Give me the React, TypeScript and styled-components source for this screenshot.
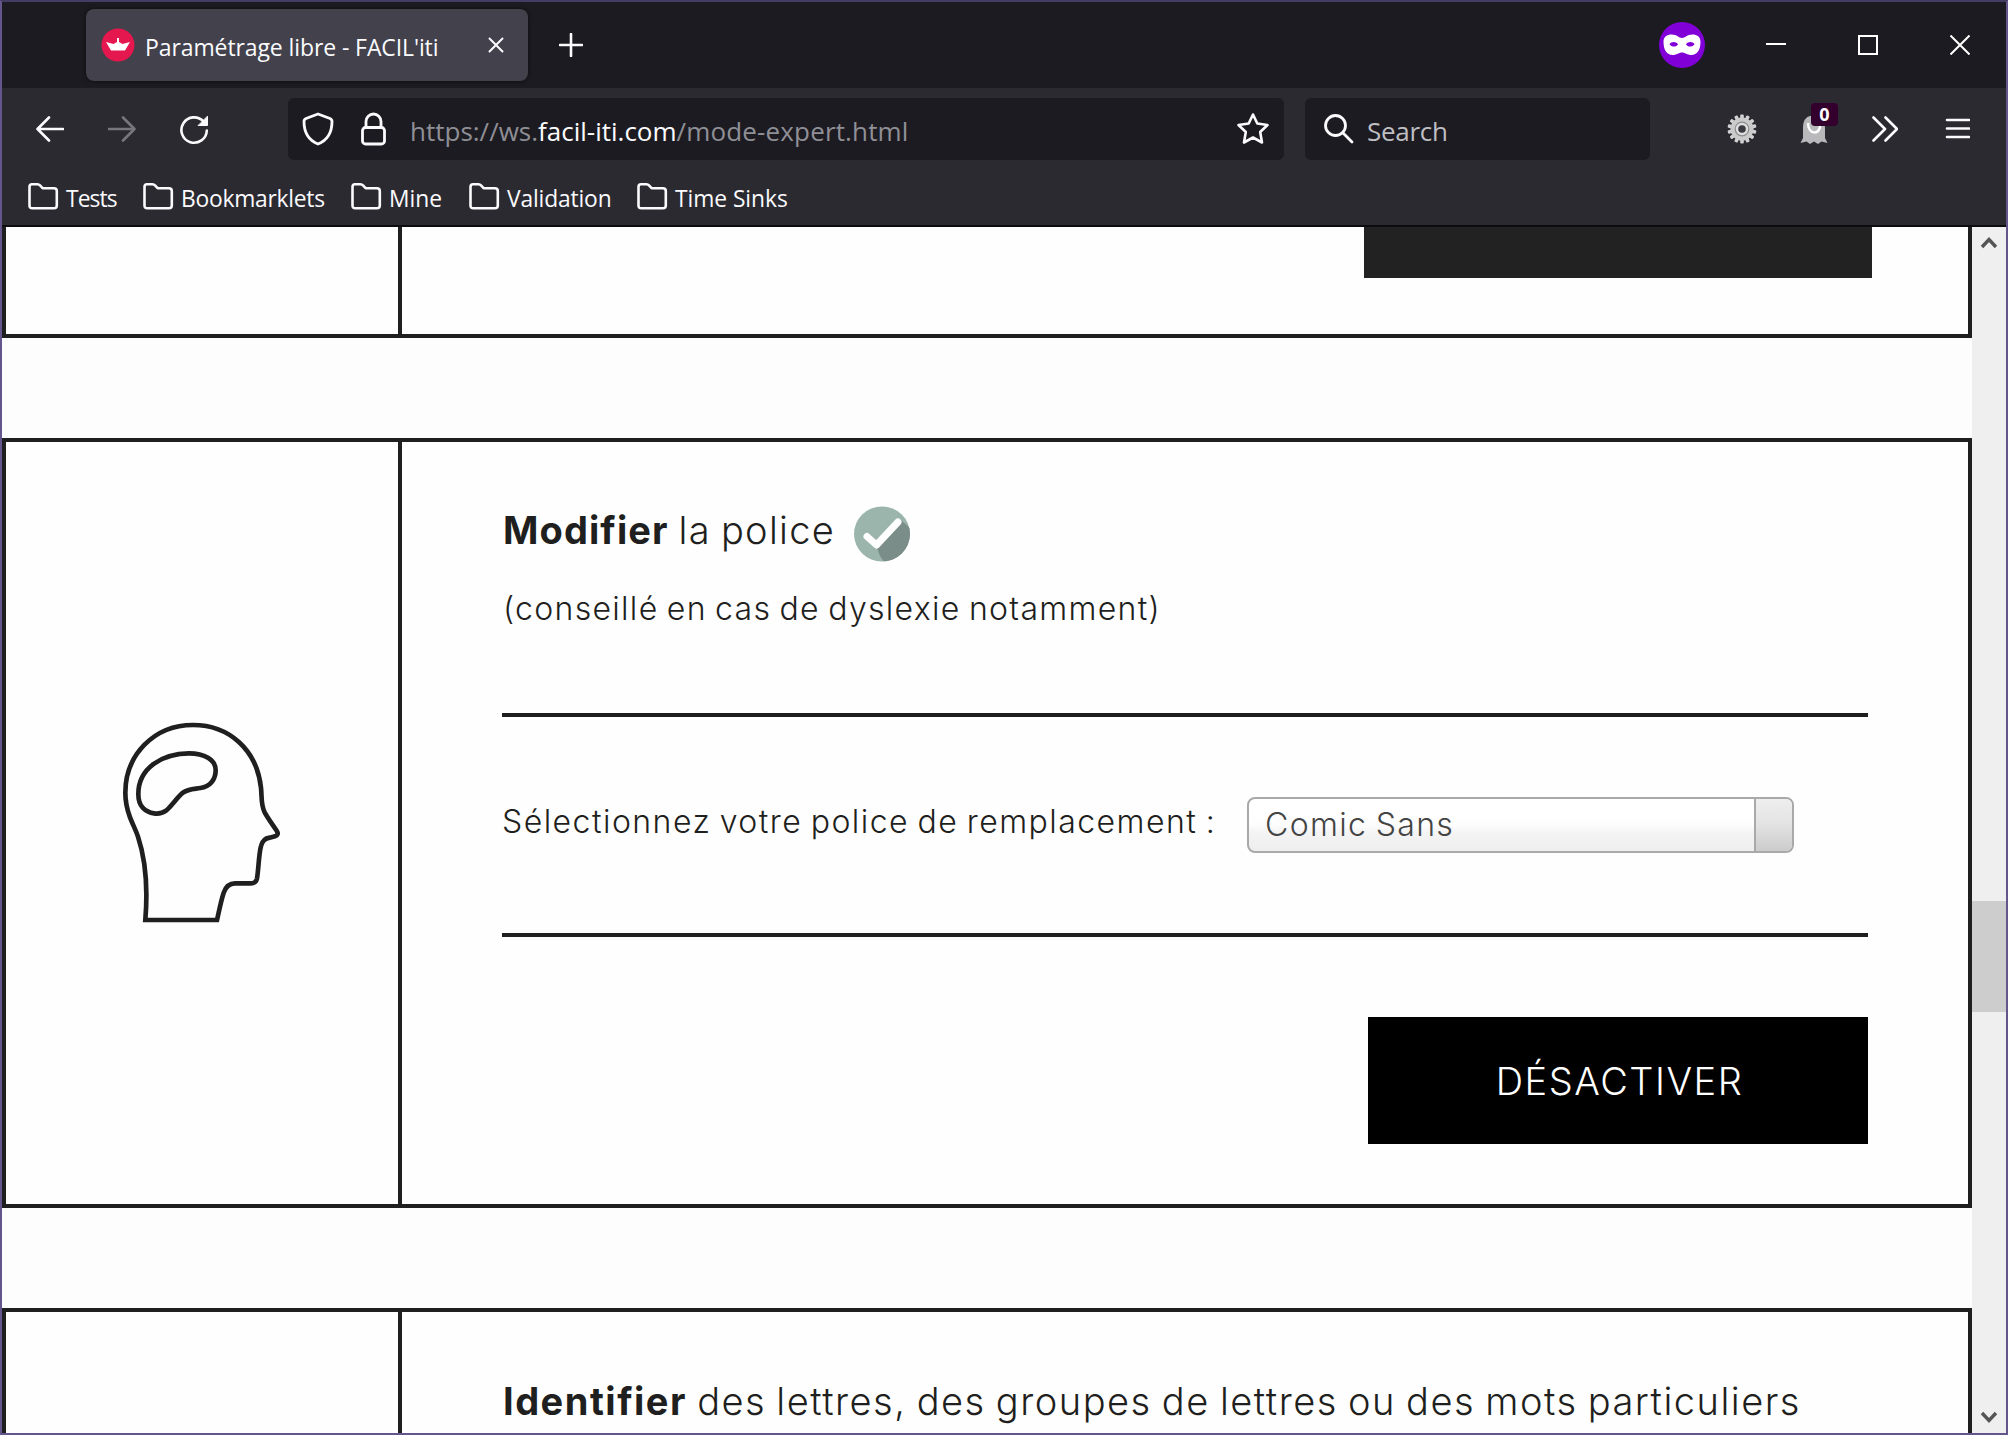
import React from "react";
import styled, { createGlobalStyle } from "styled-components";

const INK = "#1f1f20";
const UI = `"Open Sans", "Noto Sans", sans-serif`;
const BODY = `Inter, "Open Sans", sans-serif`;

const Global = createGlobalStyle`
  *, *::before, *::after { box-sizing: border-box; }
  html, body { margin: 0; padding: 0; overflow: hidden; }
  svg { display: block; flex: none; }
`;

const Browser = styled.div`
  width: 2008px;
  height: 1435px;
  display: flex;
  flex-direction: column;
  overflow: hidden;
  border: 2px solid #64558c;
  border-top-color: #423d62;
  background: #2b2a31;
  font-family: ${UI};
  color: #fbfbfe;
`;

const TabStrip = styled.header`
  height: 86px;
  flex: none;
  display: flex;
  align-items: center;
  background: #1c1b21;
  padding: 0 36px 0 84px;
`;

const Tab = styled.div`
  width: 442px;
  height: 72px;
  display: flex;
  align-items: center;
  background: #42414c;
  border-radius: 8px;
  padding: 0 24px 0 15px;
  box-shadow: 0 0 4px rgba(0, 0, 0, 0.6);
`;

const Spacer = styled.div`
  flex: 1;
`;

const UiText = styled.span<{ $size?: number; $ls?: number; $color?: string; $ml?: number }>`
  font-size: ${(p) => p.$size ?? 23}px;
  letter-spacing: ${(p) => p.$ls ?? 0}px;
  color: ${(p) => p.$color ?? "#fbfbfe"};
  margin-left: ${(p) => p.$ml ?? 0}px;
  padding-top: 4px;
  line-height: 30px;
  white-space: pre;
`;

const NewTab = styled.div`
  margin-left: 31px;
`;

const WindowControls = styled.div`
  display: flex;
  align-items: center;
  gap: 72px;
  margin-left: 61px;
`;

const Toolbar = styled.div`
  height: 84px;
  flex: none;
  display: flex;
  align-items: center;
  padding: 0 36px 0 34px;
`;

const NavButtons = styled.div`
  width: 252px;
  display: flex;
  gap: 44px;
`;

const Field = styled.div<{ $width: number; $pad: string }>`
  width: ${(p) => p.$width}px;
  height: 62px;
  margin-top: -3px;
  display: flex;
  align-items: center;
  background: #1c1b21;
  border-radius: 6px;
  padding: ${(p) => p.$pad};
`;

const SearchSlot = styled.div`
  margin-left: 21px;
`;

const Extensions = styled.div`
  flex: 1;
  display: flex;
  align-items: center;
  justify-content: flex-end;
  padding-bottom: 2px;
`;

const Ghost = styled.div`
  position: relative;
  width: 28px;
  height: 30px;
  margin: 0 44px 0 43px;
`;

const Badge = styled.span`
  position: absolute;
  left: 11px;
  top: -11px;
  width: 27px;
  height: 23px;
  border-radius: 4px;
  background: #33002d;
  color: #fff;
  font: 700 18px/22px "Open Sans", sans-serif;
  text-align: center;
`;

const Bookmarks = styled.nav`
  height: 53px;
  flex: none;
  display: flex;
  align-items: flex-start;
  padding: 8px 0 0 25px;
`;

const Bookmark = styled.div<{ $width: number }>`
  width: ${(p) => p.$width}px;
  height: 32px;
  display: flex;
  align-items: center;
`;

const BookmarkLabel = styled(UiText)`
  padding-top: 6px;
  margin-left: 7px;
`;

const Viewport = styled.div`
  flex: 1;
  min-height: 0;
  display: flex;
  background: #fdfdfd;
  border-top: 2px solid #0c0c0d;
`;

const Page = styled.main`
  width: 1970px;
  display: flex;
  flex-direction: column;
  gap: 100px;
  overflow: hidden;
  font-family: ${BODY};
  color: ${INK};
`;

const Card = styled.section<{ $height: number; $cut?: "top" | "bottom" }>`
  height: ${(p) => p.$height}px;
  flex: none;
  display: flex;
  border: 4px solid ${INK};
  border-top-width: ${(p) => (p.$cut === "top" ? 0 : 4)}px;
  border-bottom-width: ${(p) => (p.$cut === "bottom" ? 0 : 4)}px;
  background: #fefefe;
`;

const IconCell = styled.div`
  width: 396px;
  flex: none;
  display: flex;
  align-items: center;
  justify-content: center;
  border-right: 4px solid ${INK};
`;

const Content = styled.div<{ $pad?: string }>`
  flex: 1;
  display: flex;
  flex-direction: column;
  padding: ${(p) => p.$pad ?? "0 100px"};
`;

const PrevButton = styled.div`
  width: 508px;
  height: 51px;
  margin-right: -4px;
  align-self: flex-end;
  background: #222223;
`;

const Intro = styled.div`
  height: 271px;
  padding-top: 64px;
`;

const Heading = styled.h2`
  display: flex;
  align-items: center;
  height: 56px;
  margin: 0;
  font-weight: 300;
`;

const Text = styled.span<{ $size: number; $ls?: number; $weight?: number; $ml?: number; $color?: string; $lift?: number }>`
  display: block;
  font-size: ${(p) => p.$size}px;
  font-weight: ${(p) => p.$weight ?? 300};
  letter-spacing: ${(p) => p.$ls ?? 0}px;
  word-spacing: -2px;
  margin-left: ${(p) => p.$ml ?? 0}px;
  color: ${(p) => p.$color ?? "inherit"};
  line-height: 44px;
  padding-bottom: ${(p) => p.$lift ?? 0}px;
  white-space: pre;
`;

const CheckSlot = styled.div`
  margin-left: 18px;
`;

const Note = styled.p`
  margin: 25px 0 0;
`;

const Rule = styled.div`
  height: 4px;
  flex: none;
  background: ${INK};
`;

const Choice = styled.div`
  height: 216px;
  display: flex;
  align-items: center;
`;

const ChoiceLabel = styled.div`
  width: 745px;
  flex: none;
`;

const Select = styled.div`
  width: 547px;
  height: 56px;
  display: flex;
  border: 2px solid #a9a9a9;
  border-radius: 8px;
  overflow: hidden;
  background: linear-gradient(#ffffff 20%, #fdfdfd 50%, #f4f4f4 64%, #eeeeee 100%);
`;

const SelectValue = styled.div`
  flex: 1;
  display: flex;
  align-items: center;
  padding-left: 16px;
`;

const SelectArrow = styled.div`
  width: 38px;
  border-left: 2px solid #a9a9a9;
  background: linear-gradient(#eeeeee 0%, #e4e4e4 45%, #cccccc 100%);
`;

const Disable = styled.button`
  width: 500px;
  height: 127px;
  margin: 80px 0 0;
  padding: 0 0 0 3px;
  border: 0;
  align-self: flex-end;
  background: #000;
  color: #fff;
  font-family: ${BODY};
`;

const Scrollbar = styled.aside`
  flex: 1;
  display: flex;
  flex-direction: column;
  align-items: center;
  background: #efefef;
  padding: 9px 0;
`;

const Thumb = styled.div`
  width: 34px;
  height: 111px;
  margin: 652px 0 auto;
  background: #cdcdcd;
`;

const stroke = { fill: "none", stroke: "#fbfbfe", strokeWidth: 2.6, strokeLinecap: "round", strokeLinejoin: "round" } as const;

const Favicon = () => (
  <svg width="34" height="34" viewBox="0 0 34 34">
    <circle cx="17" cy="17" r="16.5" fill="#e5174f" />
    <path d="M5 14 L12.5 16 L16 14 V10 H18 V14 L21.5 16 L29 14 L24 22.5 H10 Z" fill="#fff" />
  </svg>
);

const Mask = () => (
  <svg width="46" height="46" viewBox="0 0 46 46">
    <circle cx="23" cy="23" r="23" fill="#8000d7" />
    <path
      fillRule="evenodd"
      fill="#fff"
      d="M4.500 20 C4.500 14.500 8 12.500 12.500 12.500 C18 12.500 20 16 23 16 C26 16 28 12.500 33.500 12.500 C38 12.500 41.500 14.500 41.500 20 C41.500 28 38 33 32.500 33 C28 33 26 30.500 23 30.500 C20 30.500 18 33 13.500 33 C8 33 4.500 28 4.500 20 Z M10.500 22.300 C12 19.300 17 19 19 22.300 C17.500 25.400 12.500 25.300 10.500 22.300 Z M27 22.300 C29 19 34 19.300 35.500 22.300 C33.500 25.300 28.500 25.400 27 22.300 Z"
    />
  </svg>
);

const Folder = () => (
  <svg width="32" height="29" viewBox="0 0 32 29" {...stroke}>
    <path d="M2.500 5 Q2.500 2.300 5 2.300 H10.500 Q12 2.300 13 3.400 L15.600 6.200 H27 Q29.800 6.200 29.800 9 V23.500 Q29.800 26.300 27 26.300 H5.300 Q2.500 26.300 2.500 23.500 Z" />
  </svg>
);

const Gear = () => (
  <svg width="30" height="30" viewBox="0 0 30 30">
    {Array.from({ length: 14 }, (_, i) => (
      <rect key={i} x="13.200" y="0.500" width="3.600" height="6" rx="1" fill="#d2d2d2" transform={`rotate(${(i * 360) / 14} 15 15)`} />
    ))}
    <circle cx="15" cy="15" r="11.500" fill="#cacaca" />
    <circle cx="15" cy="15" r="6.800" fill="#dedede" stroke="#8d8d8d" strokeWidth="1.200" />
    <circle cx="15" cy="15" r="3.800" fill="#3a3a40" />
  </svg>
);

const Head = () => (
  <svg width="166.700" height="206.700" viewBox="60 60 500 620" fill="none" stroke={INK} strokeWidth="14" strokeLinejoin="round">
    <path
      strokeLinejoin="miter"
      d="M139 660 H354 C360 634 366 602 374 578 C381 558 391 550 408 550 H456 C467 550 472 545 474 535 C479 504 479 465 486 438 C490 421 499 415 512 413 L528 409 C537 406 538 400 533 392 C521 374 506 354 497 337 C485 313 489 291 486 264 C474 150 391 75 282 75 C165 75 79 165 79 278 C79 303 84 327 92 349 C99 369 110 389 117 410 C142 485 147 561 139 660 Z"
    />
    <path d="M118 282 C118 205 188 161 270 160 C315 160 350 178 350 211 C350 238 334 260 304 264 C286 267 267 266 252 278 C235 291 218 318 201 332 C181 347 149 342 131 323 C121 312 118 300 118 282 Z" />
  </svg>
);

const Check = () => (
  <svg width="58" height="56" viewBox="0 0 58 56">
    <defs>
      <clipPath id="disc"><ellipse cx="29" cy="28" rx="28" ry="27.500" /></clipPath>
    </defs>
    <ellipse cx="29" cy="28" rx="28" ry="27.500" fill="#9bb5ad" />
    <path clipPath="url(#disc)" fill="#7b8d88" d="M24 42 L48 14 L75 38 L50 70 L34 60 L27 50 Z" />
    <path d="M14 30.500 L23.500 39 L45 16" fill="none" stroke="#fff" strokeWidth="7" strokeLinejoin="round" strokeLinecap="round" />
  </svg>
);

const Chevron = ({ down }: { down?: boolean }) => (
  <svg width="18" height="13" viewBox="0 0 18 13" fill="none" stroke="#555" strokeWidth="3.400">
    <path d={down ? "M2 2 L9 9.500 L16 2" : "M2 11 L9 3.500 L16 11"} />
  </svg>
);

const bookmarks = [
  { label: "Tests", width: 115, ls: -0.9 },
  { label: "Bookmarklets", width: 208, ls: -0.25 },
  { label: "Mine", width: 118, ls: 0 },
  { label: "Validation", width: 168, ls: -0.15 },
  { label: "Time Sinks", width: 180, ls: -0.05 },
];

export default function App() {
  return (
    <>
      <Global />
      <Browser>
        <TabStrip>
          <Tab>
            <Favicon />
            <UiText $ml={10} $ls={-0.1}>Paramétrage libre - FACIL'iti</UiText>
            <Spacer />
            <svg width="16" height="16" viewBox="0 0 16 16" {...stroke} strokeWidth={2}>
              <path d="M1.500 1.500 L14.500 14.500 M14.500 1.500 L1.500 14.500" />
            </svg>
          </Tab>
          <NewTab>
            <svg width="24" height="24" viewBox="0 0 24 24" {...stroke}>
              <path d="M12 1 V23 M1 12 H23" />
            </svg>
          </NewTab>
          <Spacer />
          <Mask />
          <WindowControls>
            <svg width="20" height="20" viewBox="0 0 20 20"><rect y="8" width="20" height="2" fill="#fff" /></svg>
            <svg width="20" height="20" viewBox="0 0 20 20"><rect x="1" y="1" width="18" height="18" fill="none" stroke="#fff" strokeWidth="2" /></svg>
            <svg width="20" height="20" viewBox="0 0 20 20"><path d="M0.500 0.500 L19.500 19.500 M19.500 0.500 L0.500 19.500" stroke="#fff" strokeWidth="2" /></svg>
          </WindowControls>
        </TabStrip>
        <Toolbar>
          <NavButtons>
            <svg width="28" height="28" viewBox="0 0 28 28" {...stroke}><path d="M27 14 H1.500 M13 2.500 L1.500 14 L13 25.500" /></svg>
            <svg width="28" height="28" viewBox="0 0 28 28" {...stroke} stroke="#77767c"><path d="M1 14 H26.500 M15 2.500 L26.500 14 L15 25.500" /></svg>
            <svg width="29" height="30" viewBox="0 0 29 30" {...stroke}>
              <path d="M26.800 15.500 A12.700 12.700 0 1 1 23.500 6.500" />
              <path d="M27.500 1.500 V10.500 H18.500 Z" fill="#fbfbfe" strokeWidth="1" />
            </svg>
          </NavButtons>
          <Field $width={996} $pad="0 14px 0 14px">
            <svg width="32" height="34" viewBox="0 0 32 34" {...stroke} strokeWidth={2.8}>
              <path d="M16 2 L28 6.500 Q30 7.300 30 9.500 C30 20 26 28 16 32 C6 28 2 20 2 9.500 Q2 7.300 4 6.500 Z" />
            </svg>
            <svg width="82" height="34" viewBox="-27 0 82 34" {...stroke} strokeWidth={2.8}>
              <rect x="1.500" y="15.500" width="22" height="16.500" rx="3" />
              <path d="M5 15.500 V9.500 A7.500 7.500 0 0 1 20 9.500 V15.500" />
            </svg>
            <UiText $size={26} $color="#8f8f96" $ml={-6}>https://ws.</UiText>
            <UiText $size={26}>facil-iti.com</UiText>
            <UiText $size={26} $ls={0.15} $color="#8f8f96">/mode-expert.html</UiText>
            <Spacer />
            <svg width="34" height="34" viewBox="0 0 34 34" {...stroke}>
              <path d="M17 2.500 L21.300 11.500 L31.500 13 L24.200 20 L26 30.500 L17 25.500 L8 30.500 L9.800 20 L2.500 13 L12.700 11.500 Z" />
            </svg>
          </Field>
          <SearchSlot>
            <Field $width={345} $pad="0 0 0 19px">
              <svg width="30" height="30" viewBox="0 0 30 30" {...stroke} strokeWidth={2.8}>
                <circle cx="11.500" cy="11.500" r="10" />
                <path d="M18.800 18.800 L28 28" />
              </svg>
              <UiText $size={26} $ls={-0.3} $color="#bebec3" $ml={13}>Search</UiText>
            </Field>
          </SearchSlot>
          <Extensions>
            <Gear />
            <Ghost>
              <svg width="28" height="30" viewBox="0 0 28 30">
                <path d="M3 14 C3 5 7 1.500 14 1.500 C21 1.500 25 5 25 14 V24 L27.500 29 L21.500 27.500 L18 30 L14 27.500 L10 30 L6.500 27.500 L0.500 29 L3 24 Z" fill="#b9b9bb" />
                <path d="M8 9 C8 21 20 21 20 12" fill="none" stroke="#fff" strokeWidth="2.500" />
              </svg>
              <Badge>0</Badge>
            </Ghost>
            <svg width="26" height="26" viewBox="0 0 26 26" {...stroke}><path d="M1.500 1.500 L13 13 L1.500 24.500 M13.500 1.500 L25 13 L13.500 24.500" /></svg>
            <svg width="72" height="24" viewBox="-48 0 72 24" {...stroke}><path d="M1 3 H23 M1 11.500 H23 M1 20 H23" /></svg>
          </Extensions>
        </Toolbar>
        <Bookmarks>
          {bookmarks.map((b) => (
            <Bookmark key={b.label} $width={b.width}>
              <Folder />
              <BookmarkLabel $ls={b.ls} $size={22.8}>{b.label}</BookmarkLabel>
            </Bookmark>
          ))}
        </Bookmarks>
        <Viewport>
          <Page>
            <Card $height={111} $cut="top">
              <IconCell />
              <Content><PrevButton /></Content>
            </Card>
            <Card $height={770}>
              <IconCell><Head /></IconCell>
              <Content>
                <Intro>
                  <Heading>
                    <Text $size={38} $weight={700} $ls={1.1} $ml={1} $lift={8}>Modifier</Text>
                    <Text $size={38} $ls={1.3} $lift={8}> la police</Text>
                    <CheckSlot><Check /></CheckSlot>
                  </Heading>
                  <Note><Text $size={32} $ls={1.3} $ml={1}>(conseillé en cas de dyslexie notamment)</Text></Note>
                </Intro>
                <Rule />
                <Choice>
                  <ChoiceLabel><Text $size={32} $ls={1.46} $lift={7}>Sélectionnez votre police de remplacement :</Text></ChoiceLabel>
                  <Select>
                    <SelectValue><Text $size={32} $ls={1.35} $color="#444">Comic Sans</Text></SelectValue>
                    <SelectArrow />
                  </Select>
                </Choice>
                <Rule />
                <Disable><Text $size={38} $ls={1.5}>DÉSACTIVER</Text></Disable>
              </Content>
            </Card>
            <Card $height={126} $cut="bottom">
              <IconCell />
              <Content $pad="63px 0 0 100px">
                <Heading>
                  <Text $size={38} $weight={700} $ls={1.5} $ml={1} $lift={4}>Identifier</Text>
                  <Text $size={38} $ls={1.5} $lift={4}> des lettres, des groupes de lettres ou des mots particuliers</Text>
                </Heading>
              </Content>
            </Card>
          </Page>
          <Scrollbar>
            <Chevron />
            <Thumb />
            <Chevron down />
          </Scrollbar>
        </Viewport>
      </Browser>
    </>
  );
}
